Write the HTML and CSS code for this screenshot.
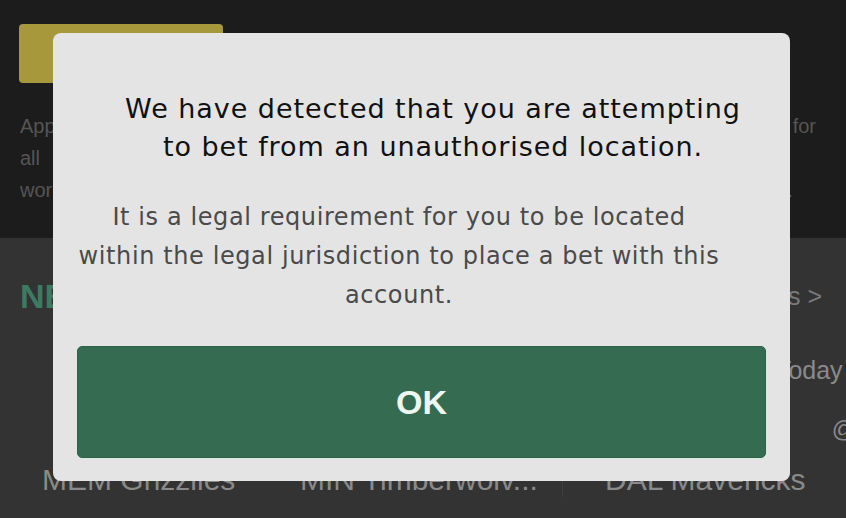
FILE: index.html
```html
<!DOCTYPE html>
<html lang="en">
<head>
  <meta charset="UTF-8" />
  <title>Sportsbook</title>
  <link rel="stylesheet" href="styles.css">
</head>
<body>

  <div class="app">
    <section class="promo">
      <div class="promo-btn"></div>
      <p class="promo-text">
        <span class="line">Apply the promo code when you register. Offer valid for</span>
        <span class="line mid">all new customers. Minimum odds and stake rules</span>
        <span class="line last">worldwide excluding restricted territories only.</span>
      </p>
    </section>

    <section class="events">
      <div class="events-head">
        <h2>NBA</h2>
        <a class="see-all" href="#">All events &gt;</a>
      </div>
      <div class="cards">
        <div class="card">
          <div class="when">Today 01:00</div>
          <div class="at">@</div>
          <div class="teams">
            <span>MEM Grizzlies</span>
            <span>MIN Timberwolv...</span>
          </div>
        </div>
        <div class="card">
          <div class="when">Today 01:30</div>
          <div class="at">@</div>
          <div class="teams">
            <span>DAL Mavericks</span>
            <span>PHX Suns</span>
          </div>
        </div>
      </div>
    </section>
  </div>

  <div class="modal">
    <h1 class="modal-title">We have detected that you are attempting<br>to bet from an unauthorised location.</h1>
    <p class="modal-text">It is a legal requirement for you to be located<br>within the legal jurisdiction to place a bet with this<br>account.</p>
    <button class="ok-btn">OK</button>
  </div>

</body>
</html>
```

FILE: styles.css
```css
body {
  margin: 0;
  width: 846px;
  height: 518px;
  overflow: hidden;
  font-family: 'Liberation Sans', Arial, sans-serif;
  background: #333333;
}
.app {
  display: flex;
  flex-direction: column;
  height: 518px;
}
.promo {
  background: #1c1c1c;
  height: 238px;
  box-sizing: border-box;
  padding: 24px 0 0 19px;
}
.promo-btn {
  width: 204px;
  height: 59px;
  background: #a6983b;
  border-radius: 4px;
}
.promo-text {
  margin: 27px 0 0 1px;
  width: 796px;
  font-size: 20px;
  line-height: 32px;
  color: #555555;
}
.promo-text .line {
  display: block;
  white-space: nowrap;
  text-align: justify;
  text-align-last: justify;
  overflow: hidden;
}
.promo-text .line.mid {
  width: 740px;
}
.promo-text .line.last {
  width: 773px;
}
.events {
  flex: 1;
  overflow: hidden;
}
.events-head {
  display: flex;
  justify-content: space-between;
  align-items: center;
  padding: 39px 24px 0 20px;
}
.events-head h2 {
  margin: 0;
  font-size: 34px;
  font-weight: bold;
  color: #3c7a62;
}
.see-all {
  font-size: 25px;
  color: #7a7a7a;
  text-decoration: none;
}
.cards {
  display: flex;
  margin-top: 40px;
}
.card {
  flex: 0 0 562px;
  border-right: 1px solid #3f3f3f;
  display: flex;
  flex-direction: column;
}
.when {
  text-align: center;
  font-size: 25px;
  color: #8a8a8a;
}
.at {
  text-align: center;
  font-size: 24px;
  color: #8a8a8a;
  margin-top: 30px;
}
.teams {
  display: flex;
  padding-left: 42px;
  margin-top: 20px;
  font-size: 30px;
  color: #8a8a8a;
}
.teams span {
  width: 258px;
  white-space: nowrap;
}
.modal {
  position: absolute;
  left: 53px;
  top: 33px;
  width: 737px;
  height: 448px;
  box-sizing: border-box;
  padding: 57px 24px 23px 24px;
  background: #e4e4e4;
  border-radius: 8px;
  display: flex;
  flex-direction: column;
}
.modal-title {
  margin: 0;
  padding-left: 23px;
  font-family: 'DejaVu Sans', sans-serif;
  font-size: 27px;
  line-height: 38px;
  letter-spacing: 0.95px;
  font-weight: normal;
  text-align: center;
  color: #111111;
  white-space: nowrap;
}
.modal-text {
  margin: 32px 0 0 0;
  padding-right: 45px;
  font-family: 'DejaVu Sans', sans-serif;
  font-size: 24px;
  line-height: 39px;
  letter-spacing: 0.6px;
  text-align: center;
  color: #4a4a4a;
  white-space: nowrap;
}
.ok-btn {
  margin-top: auto;
  height: 112px;
  width: 100%;
  background: #356c51;
  border: 1px solid #2f6249;
  border-radius: 5px;
  box-shadow: 0 1px 0 #d5ece2;
  font-family: 'Liberation Sans', Arial, sans-serif;
  font-size: 34px;
  font-weight: bold;
  color: #eef6f1;
}
```
